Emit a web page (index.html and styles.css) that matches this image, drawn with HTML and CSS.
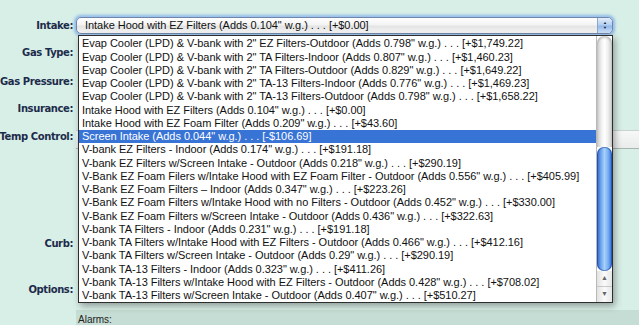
FILE: index.html
```html
<!DOCTYPE html>
<html>
<head>
<meta charset="utf-8">
<link rel="stylesheet" href="styles.css">
</head>
<body>
<div class="page">
  <div class="form">
    <div class="label r1">Intake:</div>
    <div class="field r1">
      <div class="select">
        <span class="select-text">Intake Hood with EZ Filters (Adds 0.104" w.g.) . . . [+$0.00]</span>
        <span class="select-btn"><span class="ar">&#9650;</span><span class="ar">&#9660;</span></span>
      </div>
    </div>
    <div class="label r2">Gas Type:</div>
    <div class="field r2"></div>
    <div class="label r3">Gas Pressure:</div>
    <div class="field r3"></div>
    <div class="label r4">Insurance:</div>
    <div class="field r4"></div>
    <div class="label r5">Temp Control:</div>
    <div class="field r5"><div class="strip"></div></div>
    <div class="label r6"></div>
    <div class="field r6"></div>
    <div class="label r7">Curb:</div>
    <div class="field r7"></div>
    <div class="label r8"></div>
    <div class="field r8"></div>
    <div class="label r9">Options:</div>
    <div class="field r9"></div>
  </div>
  <div class="section">
    <div class="section-title">Alarms:</div>
  </div>

  <div class="list">
    <div class="options">
      <div class="opt">Evap Cooler (LPD) &amp; V-bank with 2" EZ Filters-Outdoor (Adds 0.798" w.g.) . . . [+$1,749.22]</div>
      <div class="opt">Evap Cooler (LPD) &amp; V-bank with 2" TA Filters-Indoor (Adds 0.807" w.g.) . . . [+$1,460.23]</div>
      <div class="opt">Evap Cooler (LPD) &amp; V-bank with 2" TA Filters-Outdoor (Adds 0.829" w.g.) . . . [+$1,649.22]</div>
      <div class="opt">Evap Cooler (LPD) &amp; V-bank with 2" TA-13 Filters-Indoor (Adds 0.776" w.g.) . . . [+$1,469.23]</div>
      <div class="opt">Evap Cooler (LPD) &amp; V-bank with 2" TA-13 Filters-Outdoor (Adds 0.798" w.g.) . . . [+$1,658.22]</div>
      <div class="opt">Intake Hood with EZ Filters (Adds 0.104" w.g.) . . . [+$0.00]</div>
      <div class="opt">Intake Hood with EZ Foam Filter (Adds 0.209" w.g.) . . . [+$43.60]</div>
      <div class="opt selected">Screen Intake (Adds 0.044" w.g.) . . . [-$106.69]</div>
      <div class="opt">V-bank EZ Filters - Indoor (Adds 0.174" w.g.) . . . [+$191.18]</div>
      <div class="opt">V-bank EZ Filters w/Screen Intake - Outdoor (Adds 0.218" w.g.) . . . [+$290.19]</div>
      <div class="opt">V-Bank EZ Foam Filers w/Intake Hood with EZ Foam Filter - Outdoor (Adds 0.556" w.g.) . . . [+$405.99]</div>
      <div class="opt">V-Bank EZ Foam Filters – Indoor (Adds 0.347" w.g.) . . . [+$223.26]</div>
      <div class="opt">V-Bank EZ Foam Filters w/Intake Hood with no Filters - Outdoor (Adds 0.452" w.g.) . . . [+$330.00]</div>
      <div class="opt">V-Bank EZ Foam Filters w/Screen Intake - Outdoor (Adds 0.436" w.g.) . . . [+$322.63]</div>
      <div class="opt">V-bank TA Filters - Indoor (Adds 0.231" w.g.) . . . [+$191.18]</div>
      <div class="opt">V-bank TA Filters w/Intake Hood with EZ Filters - Outdoor (Adds 0.466" w.g.) . . . [+$412.16]</div>
      <div class="opt">V-bank TA Filters w/Screen Intake - Outdoor (Adds 0.29" w.g.) . . . [+$290.19]</div>
      <div class="opt">V-bank TA-13 Filters - Indoor (Adds 0.323" w.g.) . . . [+$411.26]</div>
      <div class="opt">V-bank TA-13 Filters w/Intake Hood with EZ Filters - Outdoor (Adds 0.428" w.g.) . . . [+$708.02]</div>
      <div class="opt">V-bank TA-13 Filters w/Screen Intake - Outdoor (Adds 0.407" w.g.) . . . [+$510.27]</div>
    </div>
    <div class="scrollbar">
      <div class="track"></div>
      <div class="thumb"></div>
      <div class="arrow up">&#9650;</div>
      <div class="arrow down">&#9660;</div>
    </div>
  </div>
</div>
</body>
</html>
```

FILE: styles.css
```css
html, body {
  margin: 0;
  padding: 0;
}
body {
  background: #d8efe7;
  width: 639px;
  height: 325px;
  overflow: hidden;
}
.page {
  position: relative;
  width: 639px;
  height: 325px;
  padding-top: 12px;
  box-sizing: border-box;
}
.form {
  display: grid;
  grid-template-columns: 73px 1fr;
  grid-template-rows: 26px 28px 30px 24px 32px 78px 26px 18px 30px;
  column-gap: 3px;
}
.label {
  font-family: "DejaVu Sans", Verdana, sans-serif;
  font-weight: bold;
  font-size: 10px;
  letter-spacing: -0.4px;
  color: #1d2b4b;
  display: flex;
  align-items: center;
  justify-content: flex-end;
  white-space: nowrap;
}
.field {
  display: flex;
  align-items: center;
}
.select {
  box-sizing: border-box;
  width: 537px;
  height: 17px;
  border: 1px solid #6f86a8;
  border-radius: 5px;
  background: linear-gradient(#ffffff, #f3f3f3 45%, #e4e4e4 55%, #f4f4f4);
  box-shadow: 0 0 0 1px #9cc4ee, 0 0 3px 2px #8db8e6;
  display: flex;
  align-items: center;
  overflow: hidden;
}
.select-text {
  flex: 1;
  padding-left: 8px;
  font-family: "Liberation Sans", Arial, sans-serif;
  font-size: 11px;
  letter-spacing: -0.04px;
  color: #111;
  white-space: nowrap;
}
.select-btn {
  width: 14px;
  height: 100%;
  display: flex;
  flex-direction: column;
  align-items: center;
  justify-content: center;
  gap: 1px;
  background: linear-gradient(#e4eefb, #b3cff2 45%, #93b9ec 55%, #cfe1f8);
  border-left: 1px solid #8ea6c8;
  border-radius: 0 4px 4px 0;
}
.ar {
  font-size: 4px;
  line-height: 4px;
  color: #1a1a1a;
}
.strip {
  width: 100%;
  height: 17px;
  margin-top: 6px;
  background: linear-gradient(#f7f8f8, #e9eceb);
  border-bottom: 1px solid #a9b3b0;
  border-top: 1px solid #c9d3d0;
}
.section {
  margin-left: 76px;
  margin-top: 6px;
  height: 30px;
  background: #c5ddd4;
  padding: 4px 0 0 2px;
  box-sizing: border-box;
}
.section-title {
  font-family: "Liberation Sans", Arial, sans-serif;
  font-size: 10px;
  line-height: 11px;
  color: #222;
}
.list {
  position: absolute;
  left: 78px;
  top: 35px;
  width: 535px;
  height: 268px;
  box-sizing: border-box;
  border: 1px solid #2e2e2e;
  background: #fff;
  box-shadow: 2px 3px 7px rgba(0, 0, 0, 0.35);
  display: flex;
}
.options {
  flex: 1;
  padding-top: 1.4px;
  overflow: hidden;
}
.opt {
  height: 13.26px;
  line-height: 13.26px;
  padding-left: 3px;
  font-family: "Liberation Sans", Arial, sans-serif;
  font-size: 11px;
  letter-spacing: -0.04px;
  color: #111;
  white-space: nowrap;
}
.opt.selected {
  background: #3873d6;
  color: #fff;
}
.scrollbar {
  width: 15px;
  display: flex;
  flex-direction: column;
  border-left: 1px solid #b9b9b9;
}
.track {
  height: 111px;
  border-radius: 7px 7px 0 0;
  background: linear-gradient(to right, #c9c9c9, #f1f1f1 30%, #ffffff 50%, #f1f1f1 70%, #cdcdcd);
  box-shadow: inset 0 2px 2px rgba(0, 0, 0, 0.18);
}
.thumb {
  height: 124px;
  border-radius: 7px;
  background: linear-gradient(to right, #2b5fc7, #6aa2ec 25%, #a9d0f9 50%, #74aef2 75%, #2f65cf);
  box-shadow: inset 0 0 0 1px rgba(20, 60, 150, 0.5);
}
.arrow {
  height: 15px;
  font-size: 7px;
  line-height: 15px;
  text-align: center;
  color: #666;
  background: linear-gradient(to right, #e2e2e2, #fafafa 50%, #e6e6e6);
}
.arrow.down {
  border-top: 1px solid #c8c8c8;
}
```
